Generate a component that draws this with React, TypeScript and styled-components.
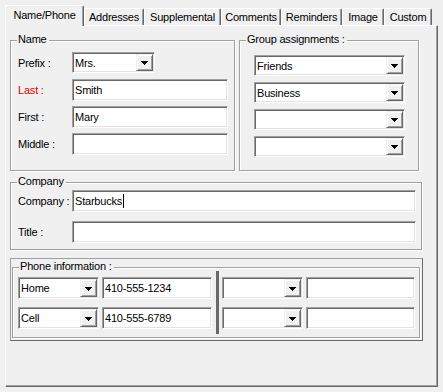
import React from "react";
import styled, { createGlobalStyle } from "styled-components";

const Global = createGlobalStyle`
  html, body { margin: 0; padding: 0; background: #f0f0f0; }
  body { font-family: "Liberation Sans", Arial, sans-serif; font-size: 11px; letter-spacing: -0.2px; color: #000; }
  * { box-sizing: border-box; }
`;

const Window = styled.div`
  width: 443px;
  height: 392px;
  padding: 5px 0 0 5px;
  background: #f0f0f0;
  overflow: hidden;
`;

const TabStrip = styled.div`
  display: flex;
  align-items: flex-end;
  height: 20px;
  position: relative;
  z-index: 1;
`;

const Tab = styled.div<{ $w: number; $active?: boolean }>`
  width: ${(p) => p.$w}px;
  height: ${(p) => (p.$active ? 21 : 17)}px;
  margin-bottom: ${(p) => (p.$active ? -1 : 0)}px;
  padding-top: ${(p) => (p.$active ? 1 : 0)}px;
  line-height: ${(p) => (p.$active ? 17 : 16)}px;
  background: #f0f0f0;
  border-top: 1px solid #fff;
  border-left: 1px solid #fff;
  border-right: 1px solid #696969;
  box-shadow: inset -1px 0 0 #a0a0a0;
  border-radius: 2px 2px 0 0;
  text-align: center;
  white-space: nowrap;
`;

const Panel = styled.div`
  width: 433px;
  height: 362px;
  border: 1px solid;
  border-color: #fff #696969 #696969 #fff;
  box-shadow: inset -1px -1px 0 #a0a0a0;
  padding: 14px 0 0 4px;
  display: flex;
  flex-direction: column;
`;

const TopRow = styled.div`
  display: flex;
  gap: 4px;
`;

const Group = styled.div<{ $w: number; $h: number; $mt?: number }>`
  position: relative;
  width: ${(p) => p.$w}px;
  height: ${(p) => p.$h}px;
  margin-top: ${(p) => p.$mt ?? 0}px;
  border: 1px solid #a0a0a0;
  box-shadow: inset 1px 1px 0 #fff, 1px 1px 0 #fff;
`;

const Legend = styled.span`
  position: absolute;
  top: -8px;
  left: 6px;
  padding: 0 2px 0 1px;
  line-height: 13px;
  background: #f0f0f0;
  white-space: nowrap;
`;

const FormGrid = styled.div<{ $gap: number; $pt: number }>`
  display: grid;
  grid-template-columns: 54px auto;
  grid-auto-rows: 22px;
  row-gap: ${(p) => p.$gap}px;
  align-items: center;
  justify-items: start;
  padding: ${(p) => p.$pt}px 0 0 7px;
`;

const Label = styled.span<{ $required?: boolean }>`
  color: ${(p) => (p.$required ? "#e00000" : "#000")};
  white-space: nowrap;
`;

const Field = styled.div<{ $w: number }>`
  width: ${(p) => p.$w}px;
  height: 22px;
  background: #fff;
  border: 1px solid;
  border-color: #a0a0a0 #fff #fff #a0a0a0;
  box-shadow: inset 1px 1px 0 #696969, inset -1px -1px 0 #e3e3e3;
  padding: 0 2px 0 2px;
  display: flex;
  align-items: center;
  white-space: nowrap;
  overflow: hidden;
`;

const Caret = styled.span`
  display: inline-block;
  width: 1px;
  height: 14px;
  margin-left: 1px;
  background: #000;
`;

const ComboBox = styled.div<{ $w: number; $h?: number }>`
  width: ${(p) => p.$w}px;
  height: ${(p) => p.$h ?? 21}px;
  align-self: start;
  background: #fff;
  border: 1px solid;
  border-color: #a0a0a0 #fff #fff #a0a0a0;
  box-shadow: inset 1px 1px 0 #696969, inset -1px -1px 0 #e3e3e3;
  padding: 1px 1px 1px 2px;
  display: flex;
  align-items: stretch;
  white-space: nowrap;
`;

const ComboText = styled.span`
  flex: 1;
  display: flex;
  align-items: center;
  overflow: hidden;
`;

const DropButton = styled.span`
  width: 17px;
  flex: none;
  background: #f0f0f0;
  border: 1px solid;
  border-color: #f0f0f0 #696969 #696969 #f0f0f0;
  box-shadow: inset 1px 1px 0 #fff, inset -1px -1px 0 #a0a0a0;
  display: flex;
  align-items: center;
  justify-content: center;
  padding-top: 1px;
`;

const GroupColumn = styled.div`
  display: flex;
  flex-direction: column;
  gap: 6px;
  padding: 14px 0 0 14px;
`;

const PhoneFrame = styled.div`
  width: 413px;
  height: 83px;
  margin-top: 8px;
  border: 1px solid;
  border-color: #a0a0a0 #696969 #696969 #a0a0a0;
  padding: 8px 0 0 1px;
`;

const PhoneRow = styled.div`
  display: flex;
  padding: 3px 4px 3px 5px;
`;

const PhoneCol = styled.div<{ $input: number }>`
  display: grid;
  grid-template-columns: 81px ${(p) => p.$input}px;
  grid-auto-rows: 22px;
  column-gap: 3px;
  row-gap: 8px;
  padding-top: 6px;
  align-content: start;
`;

const Divider = styled.div`
  width: 3px;
  height: 63px;
  margin: 0 3px 0 4px;
  background: #696969;
`;

function Arrow() {
  return (
    <svg width="7" height="4" viewBox="0 0 7 4" shapeRendering="crispEdges">
      <rect x="0" y="0" width="7" height="1" fill="#000" />
      <rect x="1" y="1" width="5" height="1" fill="#000" />
      <rect x="2" y="2" width="3" height="1" fill="#000" />
      <rect x="3" y="3" width="1" height="1" fill="#000" />
    </svg>
  );
}

function Combo({ w, h, value }: { w: number; h?: number; value?: string }) {
  return (
    <ComboBox $w={w} $h={h}>
      <ComboText>{value}</ComboText>
      <DropButton>
        <Arrow />
      </DropButton>
    </ComboBox>
  );
}

const tabs = [
  { label: "Name/Phone", w: 79, active: true },
  { label: "Addresses", w: 60 },
  { label: "Supplemental", w: 77 },
  { label: "Comments", w: 60 },
  { label: "Reminders", w: 61 },
  { label: "Image", w: 42 },
  { label: "Custom", w: 48 },
];

export default function App() {
  return (
    <>
      <Global />
      <Window>
        <TabStrip>
          {tabs.map((t) => (
            <Tab key={t.label} $w={t.w} $active={t.active}>
              {t.label}
            </Tab>
          ))}
        </TabStrip>
        <Panel>
          <TopRow>
            <Group $w={225} $h={131}>
              <Legend>Name</Legend>
              <FormGrid $gap={5} $pt={11}>
                <Label>Prefix :</Label>
                <Combo w={83} value="Mrs." />
                <Label $required>Last :</Label>
                <Field $w={156}>Smith</Field>
                <Label>First :</Label>
                <Field $w={156}>Mary</Field>
                <Label>Middle :</Label>
                <Field $w={156} />
              </FormGrid>
            </Group>
            <Group $w={180} $h={131}>
              <Legend>Group assignments :</Legend>
              <GroupColumn>
                <Combo w={151} value="Friends" />
                <Combo w={151} value="Business" />
                <Combo w={151} />
                <Combo w={151} />
              </GroupColumn>
            </Group>
          </TopRow>
          <Group $w={412} $h={68} $mt={11}>
            <Legend>Company</Legend>
            <FormGrid $gap={9} $pt={7}>
              <Label>Company :</Label>
              <Field $w={344}>
                Starbucks
                <Caret />
              </Field>
              <Label>Title :</Label>
              <Field $w={344} />
            </FormGrid>
          </Group>
          <PhoneFrame>
            <Group $w={408} $h={71}>
              <Legend>Phone information :</Legend>
              <PhoneRow>
                <PhoneCol $input={110}>
                  <Combo w={81} h={22} value="Home" />
                  <Field $w={110}>410-555-1234</Field>
                  <Combo w={81} h={22} value="Cell" />
                  <Field $w={110}>410-555-6789</Field>
                </PhoneCol>
                <Divider />
                <PhoneCol $input={109}>
                  <Combo w={81} h={22} />
                  <Field $w={109} />
                  <Combo w={81} h={22} />
                  <Field $w={109} />
                </PhoneCol>
              </PhoneRow>
            </Group>
          </PhoneFrame>
        </Panel>
      </Window>
    </>
  );
}
